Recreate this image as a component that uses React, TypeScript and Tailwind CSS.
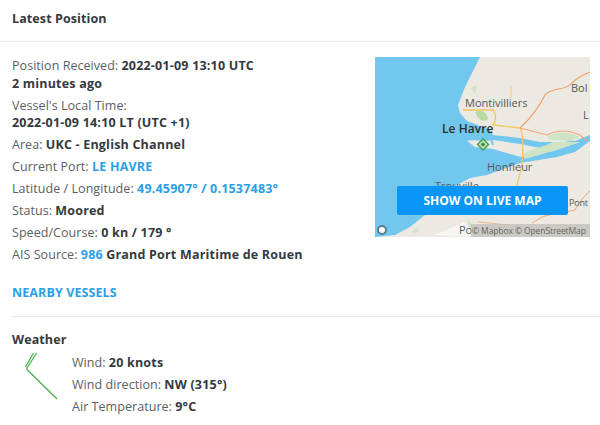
import React from "react";

const B = ({ children }: { children: React.ReactNode }) => (
  <span className="font-bold text-[#333a40] tracking-[0.2px]">{children}</span>
);
const L = ({ children }: { children: React.ReactNode }) => (
  <span className="font-bold text-[#2a9fe8] tracking-[0.2px]">{children}</span>
);

function MapArt() {
  return (
    <svg viewBox="0 0 215 180" className="absolute inset-0 w-full h-full" style={{ filter: "blur(0.4px)" }}>
      <rect width="215" height="180" fill="#ece9e3" />
      <path d="M0 0H105L98 14L90 30L83 48L85 56L92 64L118 74L150 82L200 84L215 78V84L200 95L182 100L145 106L112 118L95 121L75 132L50 158L35 170L20 178L0 180Z" fill="#72c7ee" />
      <path d="M114 72L150 76L190 76L205 82L190 85L165 85L145 81L118 78Z" fill="#ece9e3" />
      <path d="M92 84C96 82 110 85 118 83L145 87L165 91L185 85L205 85L178 94L146 100L118 92L100 90Z" fill="#ece9e3" />
      <path d="M148 99C155 90 165 92 178 85L205 85L178 94L150 102Z" fill="#cfe4c4" />
      <path d="M172 80C182 74 192 74 205 80L195 84L175 83Z" fill="#cfe4c4" />
      <path d="M113 73L118 88" stroke="#72c7ee" strokeWidth="2" fill="none" />
      <path d="M96 31L102 28L100 37Z" fill="#cfe4c4" />
      <path d="M100 55C106 52 112 55 113 62C108 66 103 62 100 55Z" fill="#b8d9a4" />
      <path d="M88 53L118 53C122 58 121 64 118 68L145 71" stroke="#f2c75c" strokeWidth="1.300" fill="none" />
      <path d="M136 29V41" stroke="#f2d078" strokeWidth="1.100" fill="none" />
      <path d="M145 71C149 78 148 95 147 106C146 115 143 122 142 129" stroke="#f0c565" strokeWidth="1.300" fill="none" />
      <path d="M145 71C155 62 165 48 170 38C176 30 190 34 196 27C202 20 208 18 215 15" stroke="#ef9d62" strokeWidth="1.100" fill="none" />
      <path d="M145 71L172 78C180 74 192 72 205 78L212 84" stroke="#efa872" strokeWidth="1.100" fill="none" />
      <path d="M215 134C208 140 204 146 200 153C188 156 175 157 167 160L157 166" stroke="#efa872" strokeWidth="1" fill="none" />
      <path d="M103 165L133 168" stroke="#efb48a" strokeWidth="1" fill="none" />
      <path d="M42 170L36 176L44 175Z" fill="#cfe4c4" />
      <path d="M92 162L98 168L94 172Z" fill="#cfe4c4" />
      <path d="M60 178L90 165L100 180Z" fill="#f7f6f3" />
      <path d="M108 82L113.500 87.500L108 93L102.500 87.500Z" fill="#bde3b2" stroke="#3c9d4b" strokeWidth="1.300" />
      <circle cx="108" cy="87.500" r="1.800" fill="#2f8f3f" />
    </svg>
  );
}

const mapLabel = "absolute text-[11px] leading-[14px] tracking-normal text-[#55585a] whitespace-nowrap";

export default function App() {
  return (
    <div className="w-[600px] h-[425px] overflow-hidden bg-white text-[#5a6065] text-[12.500px] leading-[18px] tracking-[0.05px]" style={{ fontFamily: '"Open Sans", sans-serif' }}>
      <div className="h-[42px] border-b border-[#e6e6e6] pl-3 pt-[10px] font-bold text-[#333a40] tracking-[0.1px]">Latest Position</div>
      <div className="flex pl-3 pt-[15px] pr-[10px] h-[215px]">
        <div className="flex-1">
          <div>Position Received: <B>2022-01-09 13:10 UTC</B></div>
          <div><B>2 minutes ago</B></div>
          <div className="mt-1 leading-[17px]">Vessel's Local Time:</div>
          <div><B>2022-01-09 14:10 LT (UTC +1)</B></div>
          <div className="mt-1 flex flex-col gap-1">
            <div>Area: <B>UKC - English Channel</B></div>
            <div>Current Port: <L>LE HAVRE</L></div>
            <div>Latitude / Longitude: <L>49.45907° / 0.1537483°</L></div>
            <div>Status: <B>Moored</B></div>
            <div>Speed/Course: <B>0 kn / 179 °</B></div>
            <div>AIS Source: <L>986</L> <B>Grand Port Maritime de Rouen</B></div>
          </div>
        </div>
        <div className="relative w-[215px] h-[180px] overflow-hidden shrink-0">
          <MapArt />
          <span className={`${mapLabel} left-[90px] top-[39px]`}>Montivilliers</span>
          <span className="absolute left-[67px] top-[65px] text-[12px] leading-[14px] font-semibold text-[#2b2d2e] whitespace-nowrap">Le Havre</span>
          <span className={`${mapLabel} left-[112px] top-[103px] text-[10.500px]`}>Honfleur</span>
          <span className={`${mapLabel} left-[60px] top-[122px] text-[10px]`}>Trouville</span>
          <span className={`${mapLabel} left-[196px] top-[24px]`}>Bol</span>
          <span className={`${mapLabel} left-[208px] top-[51px]`}>L</span>
          <span className="absolute left-[194px] top-[139px] text-[9px] leading-[14px] tracking-[-0.2px] text-[#55585a] whitespace-nowrap">Pont</span>
          <span className={`${mapLabel} left-[84px] top-[166px] text-[9.500px]`}>Po</span>
          <div className="absolute left-[22px] top-[129px] w-[171px] h-[29px] rounded-[2px] bg-[#0a96f7] text-white font-bold text-[12px] leading-[29px] tracking-normal text-center">SHOW ON LIVE MAP</div>
          <div className="absolute left-[96px] right-0 bottom-0 h-[13px] bg-[#bdbab5]/70 text-[8.500px] leading-[13px] tracking-[-0.1px] text-[#666] pl-[1px] whitespace-nowrap">© Mapbox © OpenStreetMap</div>
          <div className="absolute left-[2px] bottom-[2px] w-[10px] h-[10px] rounded-full bg-white border-2 border-[#5a7f90]" />
        </div>
      </div>
      <div className="pl-3 pt-[27px] h-[59px] font-bold text-[#2a9fe8] tracking-[0.1px]">NEARBY VESSELS</div>
      <div className="ml-3 border-t border-[#e6e6e6]" />
      <div className="pl-3 pt-[14px] font-bold text-[#333a40] tracking-[0.1px]">Weather</div>
      <div className="flex pl-3 mt-[5px]">
        <div className="w-[60px] shrink-0">
          <svg width="60" height="50" viewBox="0 0 60 50" className="-mt-[2px]">
            <path d="M24.500 1L14.500 17M21.500 1L13.500 15M14.500 17L45 47" stroke="#41ad49" strokeWidth="1.200" fill="none" />
          </svg>
        </div>
        <div className="flex flex-col gap-1">
          <div>Wind: <B>20 knots</B></div>
          <div>Wind direction: <B>NW (315°)</B></div>
          <div>Air Temperature: <B>9°C</B></div>
        </div>
      </div>
    </div>
  );
}
